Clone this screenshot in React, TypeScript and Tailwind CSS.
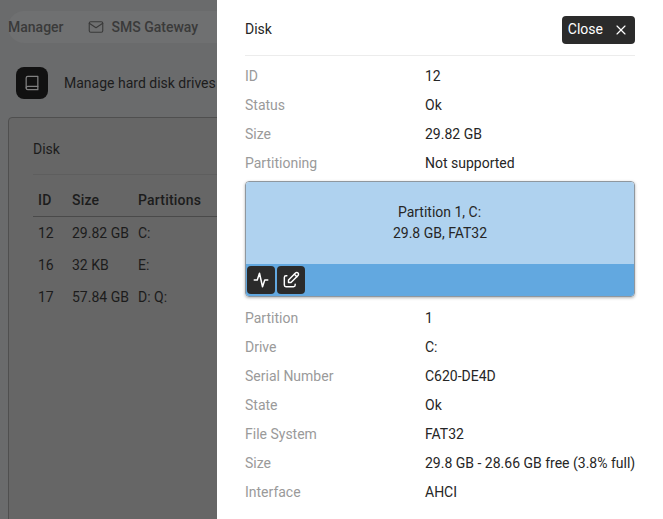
const diskRows = [
  ['ID', '12'],
  ['Status', 'Ok'],
  ['Size', '29.82 GB'],
  ['Partitioning', 'Not supported'],
];

const partitionRows = [
  ['Partition', '1'],
  ['Drive', 'C:'],
  ['Serial Number', 'C620-DE4D'],
  ['State', 'Ok'],
  ['File System', 'FAT32'],
  ['Size', '29.8 GB - 28.66 GB free (3.8% full)'],
  ['Interface', 'AHCI'],
];

const disks = [
  ['12', '29.82 GB', 'C:'],
  ['16', '32 KB', 'E:'],
  ['17', '57.84 GB', 'D: Q:'],
];

function Icon({ size = 16, width = 2, className, children }: { size?: number; width?: number; className?: string; children: React.ReactNode }) {
  return (
    <svg
      viewBox="0 0 24 24"
      width={size}
      height={size}
      fill="none"
      stroke="currentColor"
      strokeWidth={width}
      strokeLinecap="round"
      strokeLinejoin="round"
      className={className}
    >
      {children}
    </svg>
  );
}

function Row({ label, value }: { label: string; value: string }) {
  return (
    <div className="flex h-[29px] items-center text-[14px]">
      <div className="w-[180px] shrink-0 text-[#9a9a9a]">{label}</div>
      <div className="whitespace-nowrap text-[#262626]">{value}</div>
    </div>
  );
}

export default function App() {
  return (
    <div className="relative h-[519px] w-[663px] overflow-hidden bg-[#6a6b6c] font-['Roboto',sans-serif]">
      {/* Page behind the drawer */}
      <div className="w-[663px]">
        <div className="pl-[8px] pt-[11px]">
          <div className="flex h-[32px] items-center rounded-l-full bg-[#6f7071] text-[14px] font-medium text-[#3a3a3a]">
            <span>Manager</span>
            <Icon size={18} width={1.5} className="ml-[23px]">
              <rect x="3" y="5" width="18" height="14" rx="2" />
              <path d="M3 7l9 6l9 -6" />
            </Icon>
            <span className="ml-[7px]">SMS Gateway</span>
          </div>
        </div>
        <div className="flex items-center pl-[16px] pt-[24px]">
          <div className="flex h-[32px] w-[32px] items-center justify-center rounded-[8px] bg-[#111111] text-[#808080]">
            <Icon size={20} width={1.5}>
              <path d="M19 4v16h-12a2 2 0 0 1 -2 -2v-12a2 2 0 0 1 2 -2h12z" />
              <path d="M19 16h-12a2 2 0 0 0 -2 2" />
            </Icon>
          </div>
          <span className="ml-[16px] text-[14px] text-[#1c1c1c]">Manage hard disk drives</span>
        </div>
        <div className="ml-[8px] mt-[18px] h-[500px] rounded-tl-[4px] border border-[#4f4f4f] bg-[#666666] pl-[24px] pt-[20px]">
          <div className="flex h-[23px] items-center text-[14px] text-[#1c1c1c]">Disk</div>
          <div className="mt-[13px] h-px bg-[#5e5e5e]" />
          <div className="mt-[10px] flex h-[32px] items-center border-b border-[#4a4a4a] text-[14px] font-medium tracking-[0.2px] text-[#1c1c1c]">
            <span className="w-[34px] box-content pl-[5px]">ID</span>
            <span className="w-[66px]">Size</span>
            <span>Partitions</span>
          </div>
          {disks.map(([id, size, parts]) => (
            <div key={id} className="flex h-[32px] items-center text-[14px] text-[#1c1c1c]">
              <span className="w-[34px] box-content pl-[5px]">{id}</span>
              <span className="w-[66px] whitespace-nowrap">{size}</span>
              <span>{parts}</span>
            </div>
          ))}
        </div>
      </div>

      {/* Drawer */}
      <div className="absolute bottom-0 right-0 top-0 w-[446px] bg-white px-[28px]">
        <div className="flex h-[56px] items-center justify-between border-b border-[#ececec] pt-[4px]">
          <span className="text-[14px] text-[#262626]">Disk</span>
          <button className="flex h-[28px] items-center rounded-[4px] bg-[#2b2b2b] px-[6px] text-[14px] text-white">
            Close
            <Icon className="ml-[10px]" width={1.75}>
              <path d="M18 6l-12 12" />
              <path d="M6 6l12 12" />
            </Icon>
          </button>
        </div>
        <div className="pt-[6px]">
          {diskRows.map(([label, value]) => (
            <Row key={label} label={label} value={value} />
          ))}
        </div>
        <div className="mt-[3px] h-[116px] overflow-hidden rounded-[4px] border border-[#8f979e] shadow-[0_1px_3px_rgba(0,0,0,0.3)]">
          <div className="flex h-[82px] flex-col items-center justify-center bg-[#afd2ef] text-[14px] leading-[21px] text-[#262626]">
            <div className="pr-[1px]">Partition 1, C:</div>
            <div>29.8 GB, FAT32</div>
          </div>
          <div className="flex h-[32px] items-center gap-[2px] bg-[#62a8e0] pl-[1px]">
            <div className="flex h-[28px] w-[28px] items-center justify-center rounded-[4px] bg-[#2b2b2b] text-white">
              <Icon size={18}>
                <path d="M3 12h4l3 -9l4 18l3 -9h4" />
              </Icon>
            </div>
            <div className="flex h-[28px] w-[28px] items-center justify-center rounded-[4px] bg-[#2b2b2b] text-white">
              <Icon size={20} width={1.75}>
                <path d="M7 7h-1a2 2 0 0 0 -2 2v9a2 2 0 0 0 2 2h9a2 2 0 0 0 2 -2v-1" />
                <path d="M20.385 6.585a2.1 2.1 0 0 0 -2.97 -2.97l-8.415 8.385v3h3l8.385 -8.415z" />
                <path d="M16 5l3 3" />
              </Icon>
            </div>
          </div>
        </div>
        <div className="pt-[7px]">
          {partitionRows.map(([label, value]) => (
            <Row key={label} label={label} value={value} />
          ))}
        </div>
      </div>
    </div>
  );
}
